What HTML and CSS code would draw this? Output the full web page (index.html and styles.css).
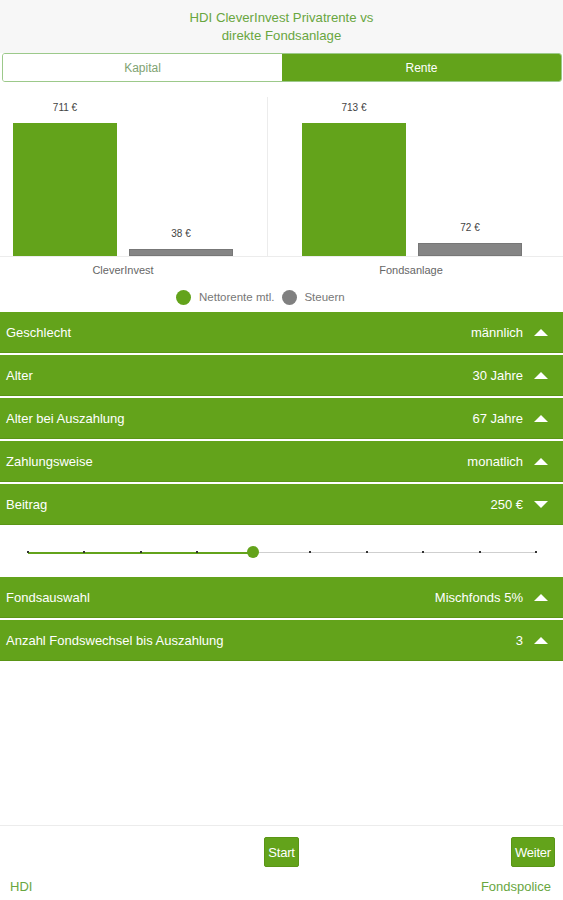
FILE: index.html
```html
<!DOCTYPE html>
<html lang="de">
<head>
<meta charset="utf-8">
<title>HDI CleverInvest</title>
<link rel="stylesheet" href="styles.css">
</head>
<body>
<div class="page">
  <header class="title">HDI CleverInvest Privatrente vs<br>direkte Fondsanlage</header>
  <div class="tabs">
    <div class="tab">Kapital</div>
    <div class="tab active">Rente</div>
  </div>
  <section class="chart">
    <div class="groups">
      <div class="group left">
        <div class="plot">
          <div class="barcol"><span class="val">711 €</span><div class="bar green" style="height:133px"></div></div>
          <div class="barcol"><span class="val">38 €</span><div class="bar gray" style="height:7px"></div></div>
        </div>
        <div class="cat">CleverInvest</div>
      </div>
      <div class="group right">
        <div class="plot">
          <div class="barcol"><span class="val">713 €</span><div class="bar green" style="height:133px"></div></div>
          <div class="barcol"><span class="val">72 €</span><div class="bar gray" style="height:13px"></div></div>
        </div>
        <div class="cat">Fondsanlage</div>
      </div>
    </div>
    <div class="legend">
      <span class="dot green"></span><span class="ltext">Nettorente mtl.</span>
      <span class="dot gray"></span><span class="ltext">Steuern</span>
    </div>
  </section>
  <div class="row"><span>Geschlecht</span><span class="value">männlich <i class="up"></i></span></div>
  <div class="row"><span>Alter</span><span class="value">30 Jahre <i class="up"></i></span></div>
  <div class="row"><span>Alter bei Auszahlung</span><span class="value">67 Jahre <i class="up"></i></span></div>
  <div class="row"><span>Zahlungsweise</span><span class="value">monatlich <i class="up"></i></span></div>
  <div class="row"><span>Beitrag</span><span class="value">250 € <i class="down"></i></span></div>
  <div class="slider">
    <div class="track">
      <div class="fill"></div>
      <div class="ticks">
        <b></b><b></b><b></b><b></b><b></b><b></b><b></b><b></b><b></b><b></b>
      </div>
      <div class="thumb"></div>
    </div>
  </div>
  <div class="row"><span>Fondsauswahl</span><span class="value">Mischfonds 5% <i class="up"></i></span></div>
  <div class="row"><span>Anzahl Fondswechsel bis Auszahlung</span><span class="value">3 <i class="up"></i></span></div>
  <div class="spacer"></div>
  <footer class="footer">
    <div class="buttons">
      <span></span>
      <button class="btn">Start</button>
      <button class="btn end">Weiter</button>
    </div>
    <div class="labels"><span>HDI</span><span>Fondspolice</span></div>
  </footer>
</div>
</body>
</html>
```

FILE: styles.css
```css
* { box-sizing: border-box; }
html, body { margin: 0; padding: 0; }
body {
  font-family: "Liberation Sans", Arial, sans-serif;
  background: #ffffff;
  width: 563px;
  height: 900px;
  overflow: hidden;
}
.page {
  display: flex;
  flex-direction: column;
  height: 900px;
}
.title {
  background: #f7f7f7;
  color: #69a63f;
  text-align: center;
  font-size: 13.2px;
  line-height: 18px;
  padding: 9px 0 0;
  height: 53px;
}
.tabs {
  display: flex;
  margin: 0 1px 0 2px;
  height: 29px;
  border: 1px solid #9cc98a;
  border-radius: 3px;
  overflow: hidden;
  background: #f7f7f7;
}
.tab {
  flex: 1;
  display: flex;
  align-items: center;
  justify-content: center;
  font-size: 12px;
  color: #7fa372;
  background: #ffffff;
}
.tab.active {
  background: #63a31b;
  color: #ffffff;
}
.chart {
  background: #ffffff;
  padding-top: 14px;
  height: 229px;
  margin-top: 1px;
}
.groups {
  display: grid;
  grid-template-columns: 267px 1fr;
}
.plot {
  height: 160px;
  display: flex;
  align-items: flex-end;
  gap: 12px;
  border-bottom: 1px solid #ececec;
}
.group.left .plot { padding-left: 13px; }
.group.right .plot { padding-left: 34px; border-left: 1px solid #ececec; }
.group.right .cat { padding-left: 34px; }
.group.left .cat { padding-left: 13px; }
.barcol {
  width: 104px;
  display: flex;
  flex-direction: column;
  align-items: center;
}
.val {
  font-size: 10px;
  line-height: 14px;
  color: #444;
  margin-bottom: 8px;
}
.bar { width: 104px; }
.bar.green { background: #63a31b; }
.bar.gray { background: #858585; border: 1px solid #777; }
.cat {
  width: 220px;
  box-sizing: content-box;
  text-align: center;
  font-size: 11px;
  line-height: 14px;
  color: #666;
  margin-top: 6px;
}
.legend {
  display: flex;
  align-items: center;
  margin-top: 12px;
  height: 16px;
  font-size: 11.5px;
  color: #777;
  padding-left: 176px;
}
.dot {
  width: 15px;
  height: 15px;
  border-radius: 50%;
  display: inline-block;
  margin-right: 8px;
}
.dot.green { background: #63a31b; }
.dot.gray { background: #808080; margin-left: 8px; margin-right: 7px; }
.row {
  height: 41px;
  margin-bottom: 2px;
  background: #63a31b;
  color: #ffffff;
  font-size: 13px;
  display: flex;
  align-items: center;
  justify-content: space-between;
  padding: 0 15px 0 6px;
  border-bottom: 1px solid #5a9516;
}
.value {
  display: flex;
  align-items: center;
  gap: 11px;
}
.up, .down {
  display: inline-block;
  width: 0;
  height: 0;
  border-left: 7px solid transparent;
  border-right: 7px solid transparent;
}
.up { border-bottom: 7px solid #ffffff; }
.down { border-top: 7px solid #ffffff; }
.slider {
  height: 50px;
  margin-top: -2px;
  margin-bottom: 2px;
  padding: 28px 26px 0 28px;
  background: #ffffff;
}
.track {
  position: relative;
  height: 1px;
  background: #cfcfcf;
}
.fill {
  height: 2px;
  width: 225px;
  background: #63a31b;
  margin-top: -1px;
}
.ticks {
  position: absolute;
  left: 0;
  right: 0;
  top: -1px;
  display: flex;
  justify-content: space-between;
}
.ticks b {
  width: 2px;
  height: 2px;
  background: #333;
  margin-left: -1px;
}
.thumb {
  position: absolute;
  left: 219px;
  top: -6px;
  width: 12px;
  height: 12px;
  border-radius: 50%;
  background: #63a31b;
}
.spacer { flex: 1; }
.footer {
  border-top: 1px solid #ececec;
  height: 75px;
  padding-top: 11px;
}
.buttons {
  display: grid;
  grid-template-columns: 1fr auto 1fr;
  align-items: center;
}
.btn {
  height: 30px;
  background: #63a31b;
  color: #ffffff;
  border: 1px solid #5a9516;
  border-radius: 2px;
  font-family: "Liberation Sans", Arial, sans-serif;
  font-size: 13px;
  padding: 0 3px;
  letter-spacing: -0.2px;
}
.btn.end { justify-self: end; margin-right: 8px; }
.labels {
  display: flex;
  justify-content: space-between;
  padding: 0 12px 0 10px;
  margin-top: 12px;
  font-size: 13px;
  line-height: 16px;
  color: #69a63f;
}
```
